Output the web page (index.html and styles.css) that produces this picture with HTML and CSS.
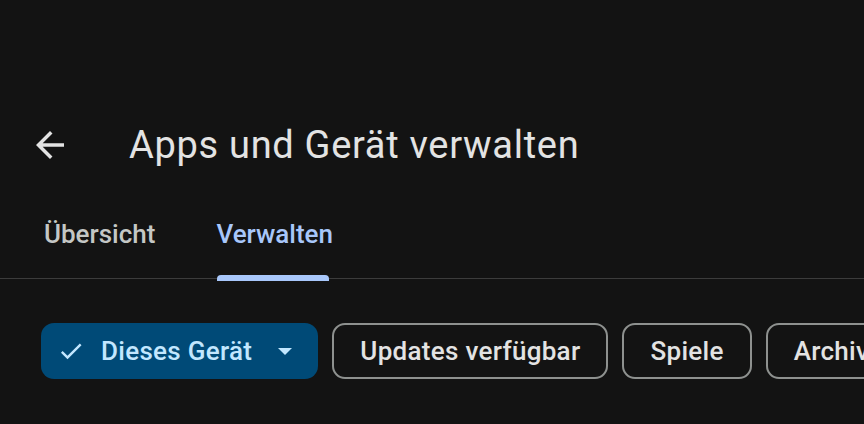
FILE: index.html
```html
<!DOCTYPE html>
<html>
	<head>
		<meta charset="utf-8">
		<title>Apps und Gerät verwalten</title>
		<link rel="stylesheet" href="styles.css">
	</head>
	<body>
		<div class="page">
			<header class="topbar">
				<button class="back" aria-label="Zurück">
					<svg viewBox="0 0 24 24" width="42" height="42"><path d="M20 11H7.83l5.59-5.59L12 4l-8 8 8 8 1.41-1.41L7.83 13H20v-2z"/></svg>
				</button>
				<h1 class="title">Apps und Gerät verwalten</h1>
			</header>
			<nav class="tabs">
				<div class="tab">Übersicht</div>
				<div class="tab active">Verwalten<span class="indicator"></span></div>
			</nav>
			<div class="chips">
				<div class="chip selected">
					<svg class="check" viewBox="0 0 24 24" width="28" height="28"><path d="M9 16.17L4.83 12l-1.42 1.41L9 19 21 7l-1.41-1.41z"/></svg>
					<span>Dieses Gerät</span>
					<span class="caret"></span>
				</div>
				<div class="chip">Updates verfügbar</div>
				<div class="chip">Spiele</div>
				<div class="chip">Archiviert</div>
			</div>
		</div>
	</body>
</html>
```

FILE: styles.css
```css
html, body {
	margin: 0;
	background: #131313;
	overflow: hidden;
}
.page {
	width: 864px;
	height: 424px;
	overflow: hidden;
	font-family: Roboto, "Noto Sans", sans-serif;
	color: #e3e3e3;
}
.topbar {
	display: flex;
	align-items: center;
	height: 90px;
	margin-top: 100px;
	padding-left: 29px;
}
.back {
	background: none;
	border: 0;
	padding: 0;
	width: 42px;
	height: 42px;
	display: flex;
}
.back svg {
	fill: #e3e3e3;
}
.title {
	margin: 0 0 0 58px;
	font-size: 38px;
	font-weight: 400;
	letter-spacing: 0.7px;
	line-height: 1;
	color: #e3e3e3;
}
.tabs {
	display: flex;
	height: 88px;
	padding-left: 44px;
	border-bottom: 1px solid #3c3c3c;
	gap: 61px;
}
.tab {
	position: relative;
	display: flex;
	align-items: center;
	font-size: 26px;
	font-weight: 500;
	color: #c4c7c5;
}
.tab.active {
	color: #a8c7fa;
}
.indicator {
	position: absolute;
	left: 1px;
	right: 4px;
	bottom: -3px;
	height: 6px;
	border-radius: 4px 4px 0 0;
	background: #a8c7fa;
}
.chips {
	display: flex;
	gap: 14px;
	margin-top: 44px;
	padding-left: 41px;
	white-space: nowrap;
}
.chip {
	flex: none;
	display: flex;
	align-items: center;
	height: 56px;
	box-sizing: border-box;
	padding: 0 26px;
	border: 2px solid #8e918f;
	border-radius: 13px;
	font-size: 26px;
	font-weight: 500;
	letter-spacing: 0.3px;
	color: #e3e3e3;
}
.chip.selected {
	border: 0;
	padding: 0 26px 0 16px;
	background: #004a77;
	color: #c2e7ff;
}
.check {
	fill: #c2e7ff;
	margin-right: 16px;
}
.caret {
	margin-left: 26px;
	width: 0;
	height: 0;
	border-left: 7px solid transparent;
	border-right: 7px solid transparent;
	border-top: 7px solid #c2e7ff;
}
```
